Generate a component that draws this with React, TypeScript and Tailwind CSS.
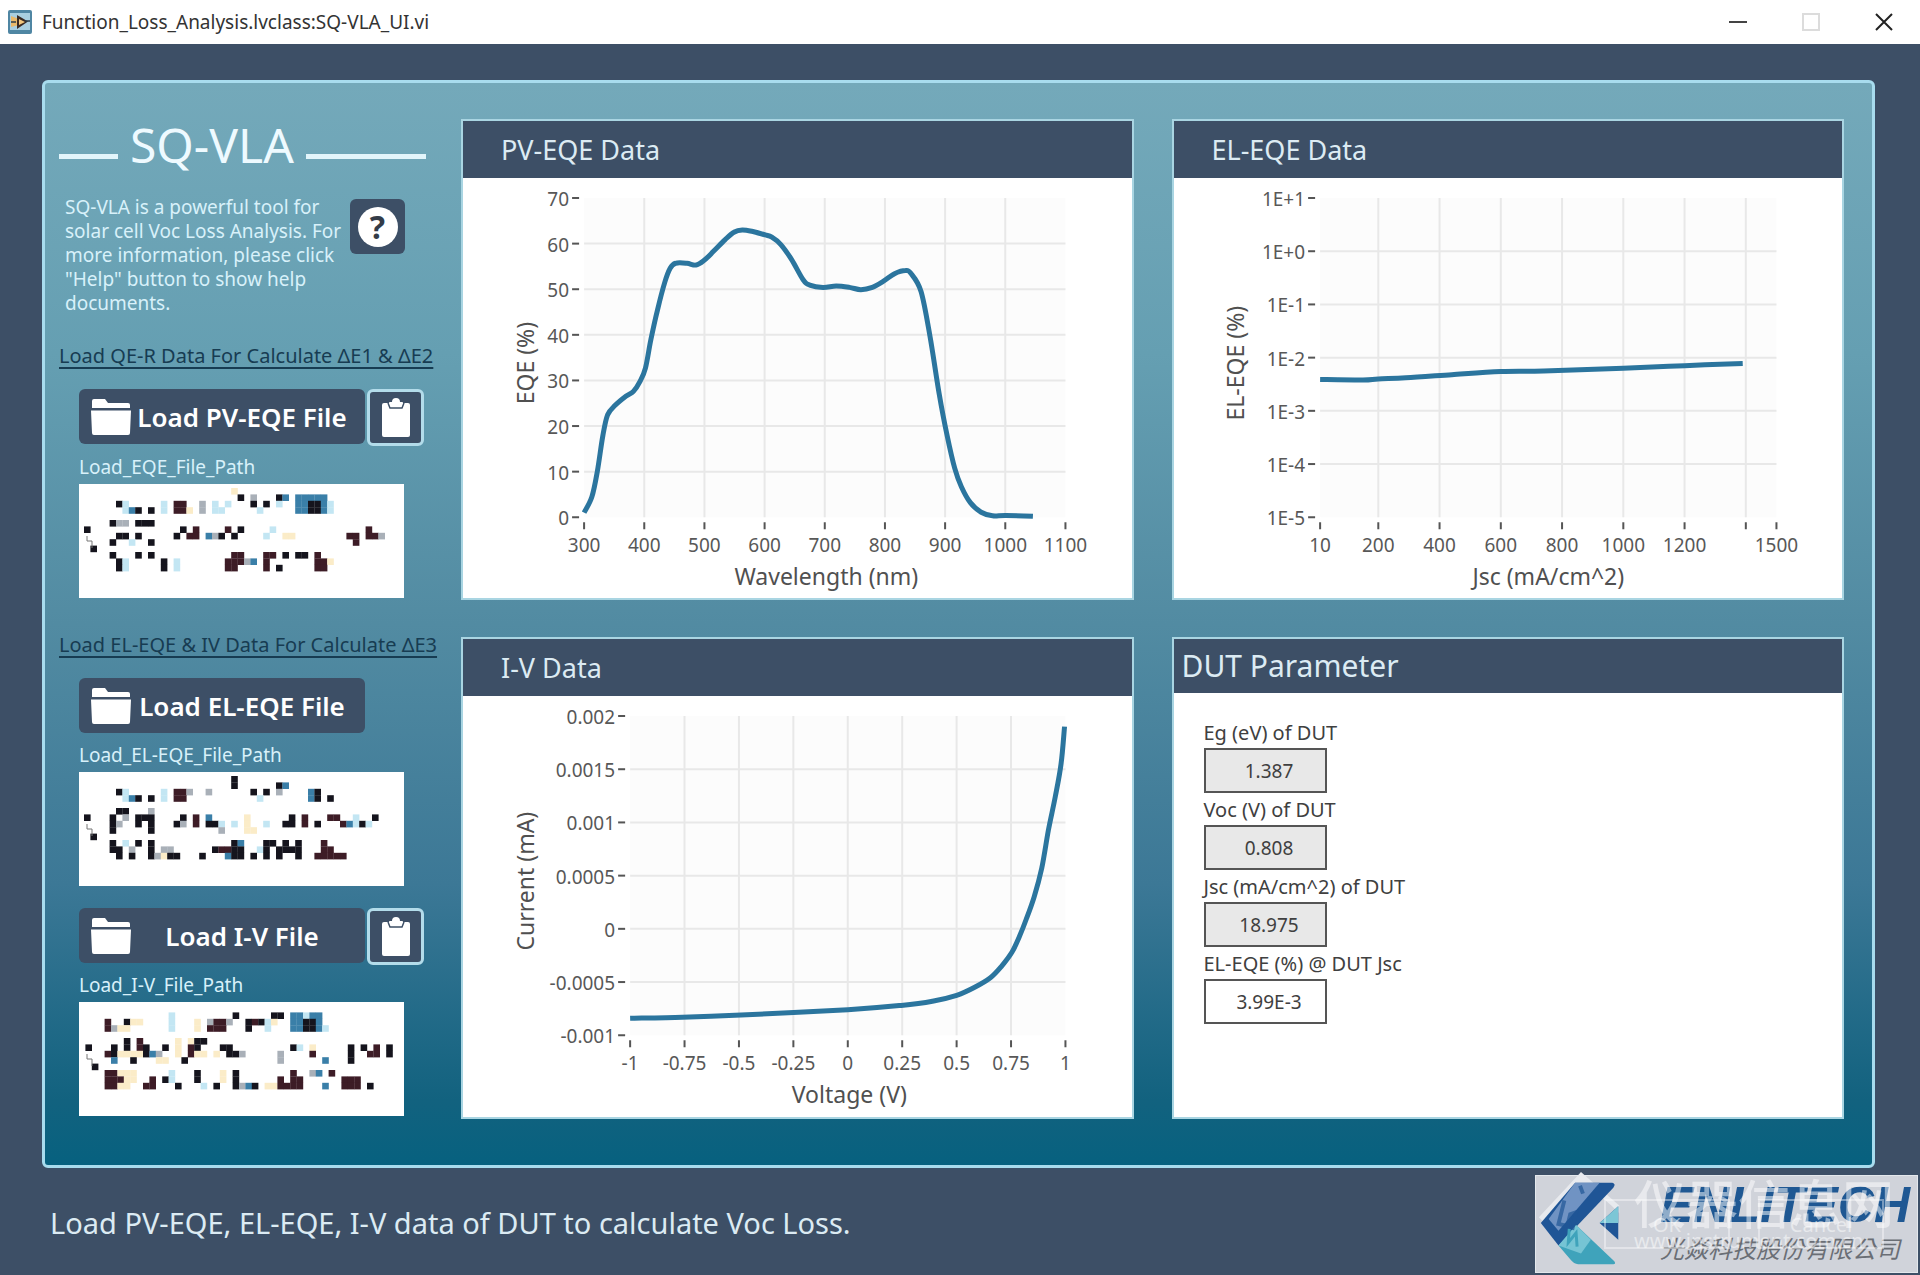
import type { ReactNode } from "react";

type Point = [number, number];
type Tick = { at: number; label: string; grid?: boolean };
type MosaicRun = [row: number, col: number, cells: string];

interface ChartProps {
  title: string;
  xTitle: string;
  yTitle: string;
  xTitleAt: number;
  yTitleAt: number;
  left: number;
  xDomain: Point;
  yDomain: Point;
  xTicks: Tick[];
  yTicks: Tick[];
  data: Point[];
}

const PLOT = { right: 602, top: 20, bottom: 339 };

const PV_EQE: Point[] = [
  [300, 1], [313, 4.5], [322, 10], [331, 17.7], [339, 22.4], [352, 24.6], [370, 26.6], [382, 27.6],
  [393, 29.8], [402, 32.7], [411, 38.9], [422, 45.5], [434, 51.5], [443, 54.6], [452, 55.7], [471, 55.7],
  [486, 55.3], [500, 56.4], [515, 58.3], [534, 60.8], [549, 62.5], [563, 63], [582, 62.6], [601, 61.9],
  [612, 61.4], [627, 59.8], [645, 56.5], [664, 52.1], [675, 50.9], [697, 50.4], [719, 50.7], [741, 50.4],
  [760, 49.9], [779, 50.4], [797, 51.7], [816, 53.4], [834, 54.1], [843, 53.5], [860, 49.5], [875, 39.6],
  [890, 27.2], [903, 18.1], [916, 10.7], [927, 6.7], [942, 3.2], [960, 1.1], [979, 0.3], [1001, 0.4], [1046, 0.2],
];

// y values are powers of ten
const EL_EQE: Point[] = [
  [10, -2.41], [150, -2.42], [200, -2.4], [290, -2.38], [440, -2.32], [600, -2.26], [740, -2.25],
  [1000, -2.2], [1200, -2.15], [1390, -2.11],
];

const IV: Point[] = [
  [-1, -0.00084], [-0.76, -0.00083], [-0.49, -0.00081], [0, -0.00076], [0.245, -0.00072], [0.389, -0.00068],
  [0.5, -0.000625], [0.583, -0.00055], [0.655, -0.00046], [0.707, -0.00035], [0.754, -0.00022],
  [0.789, -0.00007], [0.82, 0.00009], [0.856, 0.0003], [0.891, 0.00057], [0.922, 0.00093], [0.953, 0.00124],
  [0.98, 0.00155], [0.996, 0.0019],
];

const EQE_PATH: MosaicRun[] = [
  [0, 23, "y"], [1, 24, "#"], [1, 26, "g"], [1, 30, "#b"], [1, 33, "bbbbb"],
  [2, 5, "#c"], [2, 12, "c"], [2, 14, "rr"], [2, 18, "g"], [2, 20, "c.c"], [2, 26, "#.#.c"], [2, 33, "bb##bc"],
  [3, 6, "cb#.#.c.rry.g.cc"], [3, 27, "c"], [3, 33, "bb##bc"],
  [5, 4, "#gg.###"],
  [6, 0, "#"], [6, 15, "#.r"], [6, 22, "r.#"], [6, 29, "c"], [6, 44, "r"],
  [7, 5, "##.#"], [7, 14, "#.rr.bg#.#"], [7, 28, "c..yy"], [7, 41, "rr.rrg"],
  [8, 4, "#..c..#"], [8, 42, "r"], [9, 1, "#"],
  [10, 4, "#...#.#"], [10, 23, "rr"], [10, 28, "rr.#.##.r"],
  [11, 5, "#c.....#.c"], [11, 22, "rrrgb.r"], [11, 36, "rry"],
  [12, 5, "#c.....#.c"], [12, 22, "rr"], [12, 28, "r.#"], [12, 36, "rr"],
];

const EL_EQE_PATH: MosaicRun[] = [
  [0, 23, "#"], [1, 23, "#"], [1, 30, "#b"],
  [2, 5, "#c.....c.rrg..g"], [2, 26, "#.#.g"], [2, 35, "b#"],
  [3, 6, "cb#.#.c.rr"], [3, 27, "c"], [3, 35, "b#.#"],
  [5, 5, "##...g"],
  [6, 0, "#...#.g.###....#.r.b.....y"], [6, 32, "#.r...rr..c..#"],
  [7, 4, "#g..#.#...#g.r.##c.c.y..c..##.r.#...rbc#c"],
  [8, 4, "#.....#"], [8, 21, "g...yy"], [9, 1, "#"],
  [10, 4, "#.c.#.#"], [10, 23, "#b...##.#.#...r"],
  [11, 4, "##.g..#.gg"], [11, 20, "#rr##..c#.####"], [11, 37, "rr"],
  [12, 5, "#.#..#gy##...#...b##.#.#.#..#..rrrrr"],
];

const IV_PATH: MosaicRun[] = [
  [1, 14, "c"], [1, 24, "#"], [1, 30, "##.bbcbb"],
  [2, 4, "r..#yy....c...y.grrg..#r#cy..bb##b"],
  [3, 4, "rgyy......c...y.rrr...#..c...bb##bc"],
  [5, 7, "#.r.....y.y##"],
  [6, 1, "#...#.#.r#..#.y.r#...##"], [6, 33, "#c.y.....#.#.r.#"],
  [7, 4, "r#yyyy#bg..y.ryy.y.##g"], [7, 31, "g....r.....#..rr.#"],
  [8, 5, "b..#...yy..#"], [8, 31, "g......b...#"], [9, 2, "#"],
  [10, 4, "rryyy.....c...#...y.#"], [10, 33, "r..gb.r"],
  [11, 4, "rrryy..r.#c...#...y.#......r.rr......rrr"],
  [12, 4, "rryy..rr...#...c.#..#gb#.yyrrrr...b..rrr.#"],
];

const MOSAIC_FILL: Record<string, string> = {
  "#": "#15141d",
  r: "#3d1c26",
  b: "#3a7fa8",
  c: "#c3e6f3",
  y: "#fbecc8",
  g: "#a9b0b8",
};

// Catmull-Rom spline through the samples
function toPath(points: Point[]) {
  let d = `M${points[0][0].toFixed(1)} ${points[0][1].toFixed(1)}`;
  for (let i = 0; i < points.length - 1; i++) {
    const p0 = points[Math.max(i - 1, 0)];
    const p1 = points[i];
    const p2 = points[i + 1];
    const p3 = points[Math.min(i + 2, points.length - 1)];
    const c = [
      p1[0] + (p2[0] - p0[0]) / 6,
      p1[1] + (p2[1] - p0[1]) / 6,
      p2[0] - (p3[0] - p1[0]) / 6,
      p2[1] - (p3[1] - p1[1]) / 6,
      p2[0],
      p2[1],
    ].map((v) => v.toFixed(1));
    d += `C${c.join(" ")}`;
  }
  return d;
}

function Card({ title, large, children }: { title: string; large?: boolean; children: ReactNode }) {
  return (
    <section className="flex flex-col border-2 border-[#a9d5e2] bg-white">
      <h2
        className={
          large
            ? "flex h-[54px] items-center bg-[#3d4f66] px-2 text-[30px] leading-[40px] text-[#dcebf3]"
            : "flex h-[57px] items-center bg-[#3d4f66] px-[38px] text-[27px] leading-[36px] text-[#dcebf3]"
        }
      >
        {title}
      </h2>
      {children}
    </section>
  );
}

function Chart({
  title, xTitle, yTitle, xTitleAt, yTitleAt, left, xDomain, yDomain, xTicks, yTicks, data,
}: ChartProps) {
  const { right, top, bottom } = PLOT;
  const sx = (v: number) => left + ((v - xDomain[0]) / (xDomain[1] - xDomain[0])) * (right - left);
  const sy = (v: number) => bottom - ((v - yDomain[0]) / (yDomain[1] - yDomain[0])) * (bottom - top);
  const path = toPath(data.map(([x, y]) => [sx(x), sy(y)]));

  return (
    <Card title={title}>
      <svg viewBox="0 0 668 420" className="block h-auto w-full" role="img" aria-label={title}>
        <rect x={left} y={top} width={right - left} height={bottom - top} fill="#fcfcfc" />
        {xTicks.map((t) => (
          <g key={t.at}>
            {t.grid !== false && (
              <line x1={sx(t.at)} x2={sx(t.at)} y1={top} y2={bottom} stroke="#e8e8e8" strokeWidth="2" />
            )}
            <line x1={sx(t.at)} x2={sx(t.at)} y1={bottom + 5} y2={bottom + 12} stroke="#555" strokeWidth="2" />
            <text x={sx(t.at)} y={374} textAnchor="middle" fontSize="19" fill="#585858">
              {t.label}
            </text>
          </g>
        ))}
        {yTicks.map((t) => (
          <g key={t.at}>
            {t.grid !== false && (
              <line x1={left} x2={right} y1={sy(t.at)} y2={sy(t.at)} stroke="#e8e8e8" strokeWidth="2" />
            )}
            <line x1={left - 12} x2={left - 5} y1={sy(t.at)} y2={sy(t.at)} stroke="#555" strokeWidth="2" />
            <text x={left - 15} y={sy(t.at) + 8} textAnchor="end" fontSize="19" fill="#585858">
              {t.label}
            </text>
          </g>
        ))}
        <path d={path} fill="none" stroke="#2b759e" strokeWidth="5" strokeLinejoin="round" />
        <text x={xTitleAt} y={407} textAnchor="middle" fontSize="23" fill="#505050">
          {xTitle}
        </text>
        <text
          transform={`translate(${yTitleAt} 185) rotate(-90)`}
          textAnchor="middle"
          fontSize="23"
          fill="#505050"
        >
          {yTitle}
        </text>
      </svg>
    </Card>
  );
}

function FolderIcon() {
  return (
    <svg viewBox="0 0 40 38" className="h-[38px] w-10 shrink-0" fill="#fff" aria-hidden="true">
      <path d="M1 3a2 2 0 0 1 2-2h11l3 4h20a2 2 0 0 1 2 2v3H1z" />
      <path d="M0 12.500h40l-1 22.500a2 2 0 0 1-2 2H3a2 2 0 0 1-2-2z" />
    </svg>
  );
}

function LoadButton({ children }: { children: string }) {
  return (
    <button type="button" className="flex h-[55px] w-[286px] items-center rounded-md bg-[#3d4f66] px-3">
      <FolderIcon />
      <span className="flex-1 text-center text-[26px] leading-8 font-semibold whitespace-nowrap text-white">
        {children}
      </span>
    </button>
  );
}

function ClipboardButton({ label }: { label: string }) {
  return (
    <button
      type="button"
      aria-label={label}
      className="flex h-[57px] w-[57px] items-center justify-center rounded-md border-3 border-[#b3dcea] bg-[#3d4f66]"
    >
      <svg viewBox="0 0 30 40" className="h-10 w-[30px]" aria-hidden="true">
        <path d="M3 5h24a2 2 0 0 1 2 2v30a2 2 0 0 1-2 2H3a2 2 0 0 1-2-2V7a2 2 0 0 1 2-2z" fill="#fff" />
        <path d="M7 5l2 5h12l2-5" fill="none" stroke="#3d4f66" strokeWidth="1.500" />
        <path d="M8 4h3a4 4 0 0 1 8 0h3l-2 5H10z" fill="#fff" />
      </svg>
    </button>
  );
}

function FilePath({ label, runs, offset = 5 }: { label: string; runs: MosaicRun[]; offset?: number }) {
  return (
    <figure className="w-[325px]">
      <figcaption className="h-8 text-[19px] leading-[30px] text-[#d8f1fa]">{label}</figcaption>
      <svg viewBox="0 0 325 114" className="block h-[114px] w-full bg-white" role="img" aria-label={label}>
        {runs.flatMap(([row, col, cells]) =>
          cells.split("").map((cell, i) =>
            cell === "." ? null : (
              <rect
                key={`${row}-${col + i}`}
                x={offset + (col + i) * 6.4}
                y={4 + row * 6.4}
                width="6.600"
                height="6.600"
                fill={MOSAIC_FILL[cell]}
              />
            )
          )
        )}
        {/* path control glyph */}
        <path d="M8 52v5h5v7" fill="none" stroke="#777" />
      </svg>
    </figure>
  );
}

function SectionTitle({ children }: { children: string }) {
  return (
    <h3 className="text-[20px] leading-[26px] whitespace-nowrap text-[#173c52] underline decoration-2 underline-offset-4">
      {children}
    </h3>
  );
}

function Sidebar() {
  return (
    <aside className="w-[404px] shrink-0 pl-[14px]">
      <div className="-mt-1 flex h-[60px] items-center gap-3 pr-[23px]">
        <span className="mt-[22px] h-[5px] w-[59px] bg-[#e2f5fb]" />
        <h1 className="text-[48px] leading-[60px] font-normal text-[#eefaff]">SQ-VLA</h1>
        <span className="mt-[22px] h-[5px] flex-1 bg-[#e2f5fb]" />
      </div>

      <div className="mt-4 flex h-[152px] items-start justify-between pr-[44px] pl-[6px]">
        <p className="pt-1 text-[19px] leading-[24px] whitespace-nowrap text-[#d8f1fa]">
          SQ-VLA is a powerful tool for
          <br />
          solar cell Voc Loss Analysis. For
          <br />
          more information, please click
          <br />
          "Help" button to show help
          <br />
          documents.
        </p>
        <button
          type="button"
          aria-label="Help"
          className="mt-2 flex size-[55px] shrink-0 items-center justify-center rounded-md bg-[#3d4f66]"
        >
          <span className="flex size-10 items-center justify-center rounded-full bg-white text-[32px] leading-[40px] font-bold text-[#333c48]">
            ?
          </span>
        </button>
      </div>

      <SectionTitle>Load QE-R Data For Calculate ΔE1 &amp; ΔE2</SectionTitle>
      <div className="mt-5 pl-[20px]">
        <div className="flex h-[63px] items-start gap-[2px]">
          <LoadButton>Load PV-EQE File</LoadButton>
          <ClipboardButton label="Copy PV-EQE path" />
        </div>
        <FilePath label="Load_EQE_File_Path" runs={EQE_PATH} />
      </div>

      <div className="mt-[34px]">
        <SectionTitle>Load EL-EQE &amp; IV Data For Calculate ΔE3</SectionTitle>
      </div>
      <div className="mt-5 pl-[20px]">
        <div className="h-[62px]">
          <LoadButton>Load EL-EQE File</LoadButton>
        </div>
        <FilePath label="Load_EL-EQE_File_Path" runs={EL_EQE_PATH} />
        <div className="mt-[22px] flex h-[62px] items-start gap-[2px]">
          <LoadButton>Load I-V File</LoadButton>
          <ClipboardButton label="Copy I-V path" />
        </div>
        <FilePath label="Load_I-V_File_Path" runs={IV_PATH} offset={0} />
      </div>
    </aside>
  );
}

const DUT = [
  { id: "eg", label: "Eg (eV) of DUT", value: "1.387", filled: true },
  { id: "voc", label: "Voc (V) of DUT", value: "0.808", filled: true },
  { id: "jsc", label: "Jsc (mA/cm^2) of DUT", value: "18.975", filled: true },
  { id: "eleqe", label: "EL-EQE (%) @ DUT Jsc", value: "3.99E-3", filled: false },
];

function DutCard() {
  return (
    <Card title="DUT Parameter" large>
      <div className="flex flex-col px-[30px] pt-[23px]">
        {DUT.map((p) => (
          <div key={p.id} className="flex flex-col">
            <label htmlFor={p.id} className="h-8 text-[20px] leading-[34px] text-[#404040]">
              {p.label}
            </label>
            <input
              id={p.id}
              readOnly
              defaultValue={p.value}
              className={
                p.filled
                  ? "h-[45px] w-[123px] border-2 border-[#555] bg-[#e8e8e8] pl-2 text-center text-[19px] text-[#404040]"
                  : "h-[45px] w-[123px] border-2 border-[#555] bg-white pl-2 text-center text-[19px] text-[#404040]"
              }
            />
          </div>
        ))}
      </div>
    </Card>
  );
}

function TitleBar() {
  return (
    <header className="flex h-11 items-center bg-white pr-[27px] pb-px pl-2">
      <svg viewBox="0 0 24 24" className="size-6" aria-hidden="true">
        <rect width="24" height="24" rx="2" fill="#4f86a3" />
        <rect x="2" y="3" width="20" height="17" fill="#a9cfe0" />
        <path d="M3 6l8 3v6l-8 2z" fill="#e9b96a" />
        <path d="M9 5l11 6.500L9 19z" fill="#3a2a22" />
        <path d="M11 9l6 3-6 3z" fill="#f2c67c" />
        <path d="M3 12h5M17 11h5" stroke="#2b3c48" strokeWidth="1.500" />
      </svg>
      <span className="ml-[10px] flex-1 text-[19px] leading-[26px] text-[#333]">
        Function_Loss_Analysis.lvclass:SQ-VLA_UI.vi
      </span>
      <div className="flex items-center gap-[55px]">
        <button type="button" aria-label="Minimize" className="flex size-[18px] items-center">
          <span className="h-[2px] w-full bg-[#444]" />
        </button>
        <button type="button" aria-label="Maximize" disabled className="size-[18px] border-2 border-[#dcdcdc]" />
        <button type="button" aria-label="Close" className="size-[18px]">
          <svg viewBox="0 0 18 18" className="size-full" stroke="#222" strokeWidth="2" aria-hidden="true">
            <path d="M1 1l16 16M17 1L1 17" />
          </svg>
        </button>
      </div>
    </header>
  );
}

function Logo() {
  return (
    <div className="relative flex h-[98px] w-[383px] shrink-0 border border-[#e4e8ec] bg-[#d0d3da]">
      <svg viewBox="0 0 90 98" className="h-full w-[90px] shrink-0 overflow-visible" aria-hidden="true">
        <path d="M45-4L2 42l8 8L50 8l26 22 8 8V30z" fill="#e8eaee" />
        <path d="M39 7h38q4 1 1 5L22 71 4 48z" fill="#1f5596" />
        <path d="M39 7h25L22 56 12 44z" fill="#7f9fcb" opacity=".85" />
        <path d="M40 50L79 87q2 3-1 3H42q-4 0-8-5L22 71z" fill="#3fa3bb" />
        <path d="M40 50l15 15-10 14-23-8z" fill="#8fd2de" opacity=".7" />
        <path d="M28 25l-6 24 9 2 3-12 6-2-4 18M44 10l3 8" fill="none" stroke="#1f5596" strokeWidth="4" opacity=".7" />
        <path d="M33 54l-1 14 8-10 1 14" fill="none" stroke="#3fa3bb" strokeWidth="3" />
        <path d="M83 31v34L64 48z" fill="#1f5596" />
        <path d="M83 31v17H64z" fill="#7cc6d6" />
      </svg>
      <div className="flex-1 pt-1 pl-[34px] whitespace-nowrap">
        <p className="font-[Liberation_Sans,sans-serif] text-[50px] leading-[50px] font-bold text-[#1f5893] italic">
          ENLITECH
        </p>
        <p className="font-[Noto_Sans_CJK_TC,sans-serif] text-[24px] leading-[36px] text-[#6a6e75] italic">
          光焱科技股份有限公司
        </p>
      </div>
      {/* translucent stamp over the logo */}
      <div className="absolute top-0 left-[98px] whitespace-nowrap text-white/50">
        <p className="font-[Noto_Sans_CJK_SC,sans-serif] text-[52px] leading-[52px] font-medium">仪器信息网</p>
        <p className="text-[20px] leading-[26px]">www.instrument.com.cn</p>
      </div>
      <div className="absolute top-[23px] left-[68px] flex h-[50px] w-[280px] gap-[28px] text-[20px] leading-[48px] text-white/50">
        <span className="flex-1 border-2 border-white/40 text-center">OK</span>
        <span className="flex-1 border-2 border-white/40 text-center">Cancel</span>
      </div>
    </div>
  );
}

const ticks = (values: number[], hidden: number[] = []): Tick[] =>
  values.map((v) => ({ at: v, label: String(v), grid: !hidden.includes(v) }));

export default function App() {
  return (
    <div className="flex min-h-screen flex-col bg-[#3d4f66] font-[Noto_Sans,Open_Sans,sans-serif]">
      <TitleBar />
      <main className="mt-9 mr-[45px] ml-[42px] flex rounded-md border-3 border-[#a8dcee] bg-[linear-gradient(to_bottom,#74a9ba_0%,#659fb2_25%,#528ba2_50%,#3c7896_74%,#12627f_94%,#07617f_100%)] pt-9 pr-7 pb-[46px]">
        <Sidebar />
        <div className="ml-3 grid flex-1 grid-cols-2 gap-x-[38px] gap-y-[37px]">
          <Chart
            title="PV-EQE Data"
            xTitle="Wavelength (nm)"
            yTitle="EQE (%)"
            xTitleAt={363}
            yTitleAt={71}
            left={121}
            xDomain={[300, 1100]}
            yDomain={[0, 70]}
            xTicks={ticks([300, 400, 500, 600, 700, 800, 900, 1000, 1100], [300, 1100])}
            yTicks={ticks([0, 10, 20, 30, 40, 50, 60, 70], [0, 70])}
            data={PV_EQE}
          />
          <Chart
            title="EL-EQE Data"
            xTitle="Jsc (mA/cm^2)"
            yTitle="EL-EQE (%)"
            xTitleAt={374}
            yTitleAt={70}
            left={146}
            xDomain={[10, 1500]}
            yDomain={[-5, 1]}
            xTicks={[
              ...ticks([10, 200, 400, 600, 800, 1000, 1200], [10]),
              { at: 1400, label: "" },
              { at: 1500, label: "1500", grid: false },
            ]}
            yTicks={[
              { at: 1, label: "1E+1", grid: false },
              { at: 0, label: "1E+0" },
              { at: -1, label: "1E-1" },
              { at: -2, label: "1E-2" },
              { at: -3, label: "1E-3" },
              { at: -4, label: "1E-4" },
              { at: -5, label: "1E-5", grid: false },
            ]}
            data={EL_EQE}
          />
          <Chart
            title="I-V Data"
            xTitle="Voltage (V)"
            yTitle="Current (mA)"
            xTitleAt={386}
            yTitleAt={71}
            left={167}
            xDomain={[-1, 1]}
            yDomain={[-0.001, 0.002]}
            xTicks={ticks([-1, -0.75, -0.5, -0.25, 0, 0.25, 0.5, 0.75, 1], [-1, 1])}
            yTicks={ticks([-0.001, -0.0005, 0, 0.0005, 0.001, 0.0015, 0.002], [-0.001, 0.002])}
            data={IV}
          />
          <DutCard />
        </div>
      </main>
      <footer className="flex items-start justify-between pt-[7px] pr-[2px] pb-[2px] pl-[50px]">
        <p className="pt-[29px] text-[29px] leading-[38px] text-[#dcebf3]">
          Load PV-EQE, EL-EQE, I-V data of DUT to calculate Voc Loss.
        </p>
        <Logo />
      </footer>
    </div>
  );
}
